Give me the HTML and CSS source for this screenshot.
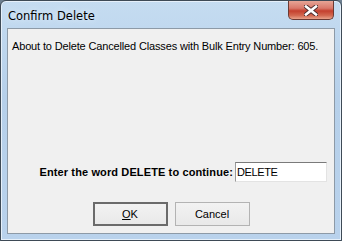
FILE: index.html
```html
<!DOCTYPE html>
<html>
<head>
<meta charset="utf-8">
<link rel="stylesheet" href="styles.css">
</head>
<body>
<div class="window">
  <div class="titlebar">
    <span class="title">Confirm Delete</span>
    <div class="close">
      <svg width="14" height="11" viewBox="0 0 14 11"><path d="M2 1.5 L12 9.5 M12 1.5 L2 9.5" stroke="#4a2a2a" stroke-width="4.4" stroke-linecap="square"/><path d="M2 1.5 L12 9.5 M12 1.5 L2 9.5" stroke="#fff" stroke-width="2.6" stroke-linecap="square"/></svg>
    </div>
  </div>
  <div class="client">
    <p class="message">About to Delete Cancelled Classes with Bulk Entry Number: 605.</p>
    <div class="entry">
      <label class="label">Enter the word DELETE to continue:</label>
      <div class="input">DELETE</div>
    </div>
    <div class="buttons">
      <div class="btn default"><span class="u">O</span>K</div>
      <div class="btn">Cancel</div>
    </div>
  </div>
</div>
</body>
</html>
```

FILE: styles.css
```css
html, body {
  margin: 0;
  padding: 0;
  background: #6d7f90;
}
.window {
  position: relative;
  width: 342px;
  height: 241px;
  box-sizing: border-box;
  border: 1px solid #3e4a56;
  border-radius: 6px 6px 0 0;
  background: linear-gradient(180deg, #c5dcf1 0%, #b6d0ea 40%, #b9d2ec 100%);
  box-shadow: inset 0 0 0 1px #e6f0fa;
  padding: 0 6px 6px 6px;
  display: flex;
  flex-direction: column;
  font-family: "Liberation Sans", Arial, sans-serif;
}
.titlebar {
  height: 27px;
  display: flex;
  align-items: center;
  flex: none;
}
.title {
  font-family: "DejaVu Sans", "Noto Sans", sans-serif;
  font-size: 11.5px;
  color: #000;
  margin-left: 1px;
  margin-top: 3px;
  text-shadow: 0 0 6px #eaf3fc;
}
.close {
  position: absolute;
  top: 0;
  right: 7px;
  width: 46px;
  height: 19px;
  box-sizing: border-box;
  border: 1px solid #6b3a33;
  border-top: none;
  border-radius: 0 0 5px 5px;
  background: linear-gradient(180deg, #e7a596 0%, #d9786a 40%, #c4402e 55%, #d2674f 80%, #e8a28a 100%);
  display: flex;
  align-items: center;
  justify-content: center;
}
.close svg { display: block; }
.client {
  flex: 1;
  background: #f0f0f0;
  border: 1px solid #8d9aa7;
  display: flex;
  flex-direction: column;
  font-size: 11px;
  color: #000;
}
.message {
  margin: 11px 0 0 4px;
  font-size: 11px;
  line-height: 13px;
  letter-spacing: -0.15px;
}
.entry {
  margin-top: 109px;
  display: flex;
  align-items: center;
  justify-content: flex-end;
  padding-right: 7px;
  gap: 2px;
}
.label {
  font-weight: bold;
  font-size: 11px;
  letter-spacing: 0.12px;
}
.input {
  width: 92px;
  height: 20px;
  box-sizing: border-box;
  background: #fff;
  border: 1px solid #e3e3e3;
  border-top-color: #7a7a7a;
  border-left-color: #9a9a9a;
  padding: 2px 0 0 1px;
  font-size: 11px;
  line-height: 14px;
  letter-spacing: -0.4px;
}
.buttons {
  margin-top: 20px;
  display: flex;
  justify-content: center;
  gap: 7px;
}
.btn {
  width: 75px;
  height: 24px;
  box-sizing: border-box;
  border: 1px solid #b3b3b3;
  background: linear-gradient(180deg, #f2f2f2 0%, #e9e9e9 100%);
  display: flex;
  align-items: center;
  justify-content: center;
  font-size: 11px;
}
.btn.default {
  border: 2px solid #6b6b6b;
}
.u { text-decoration: underline; }
```
